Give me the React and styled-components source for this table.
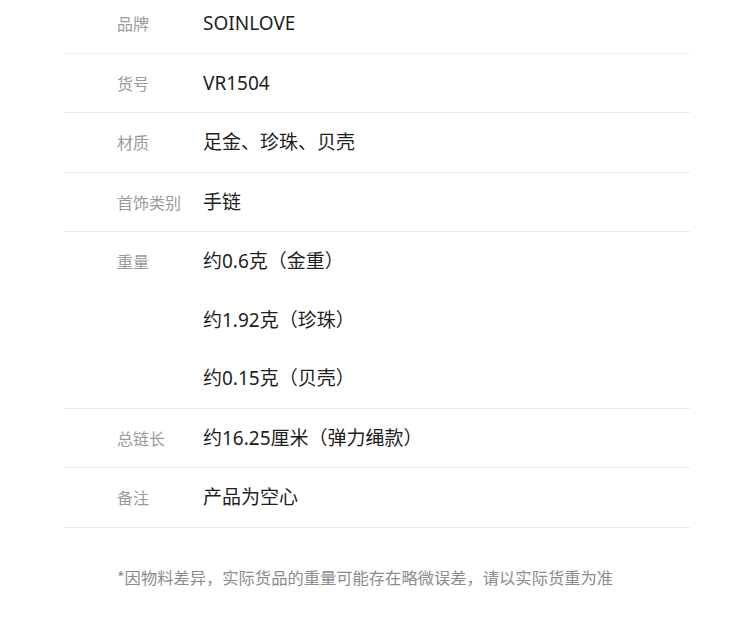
import React from 'react';
import styled, { createGlobalStyle } from 'styled-components';

const GlobalStyle = createGlobalStyle`
  html, body {
    margin: 0;
    padding: 0;
    background: #ffffff;
  }
  body {
    font-family: 'Noto Sans', 'Noto Sans CJK SC', sans-serif;
  }
`;

const specs = [
  { label: '品牌', values: ['SOINLOVE'] },
  { label: '货号', values: ['VR1504'] },
  { label: '材质', values: ['足金、珍珠、贝壳'] },
  { label: '首饰类别', values: ['手链'] },
  { label: '重量', values: ['约0.6克（金重）', '约1.92克（珍珠）', '约0.15克（贝壳）'] },
  { label: '总链长', values: ['约16.25厘米（弹力绳款）'] },
  { label: '备注', values: ['产品为空心'] },
];

function App() {
  return (
    <Page>
      <GlobalStyle />
      <SpecTable>
        {specs.map((s) => (
          <SpecRow key={s.label}>
            <Label>{s.label}</Label>
            <Values>
              {s.values.map((v) => (
                <Value key={v}>{v}</Value>
              ))}
            </Values>
          </SpecRow>
        ))}
      </SpecTable>
      <Note>*因物料差异，实际货品的重量可能存在略微误差，请以实际货重为准</Note>
    </Page>
  );
}

export default App;

//// Styles ////

const Page = styled.div`
  width: 750px;
  height: 641px;
  overflow: hidden;
  background: #ffffff;
`;

const SpecTable = styled.div`
  margin: -6px 60px 0 64px;
  display: flex;
  flex-direction: column;
`;

const SpecRow = styled.div`
  display: flex;
  align-items: flex-start;
  padding-left: 53px;
  border-bottom: 1px solid #ebebeb;
`;

const Label = styled.div`
  width: 86px;
  flex-shrink: 0;
  font-family: 'Noto Sans CJK SC', sans-serif;
  font-size: 16px;
  line-height: 58.5px;
  color: #9a9a9a;
`;

const Values = styled.div`
  display: flex;
  flex-direction: column;
`;

const Value = styled.div`
  font-family: 'Noto Sans', 'Noto Sans CJK SC', sans-serif;
  font-size: 19px;
  line-height: 58.5px;
  color: #1e1e1e;
`;

const Note = styled.p`
  margin: 37px 0 0 117px;
  font-family: 'Noto Sans CJK SC', sans-serif;
  font-size: 16.3px;
  line-height: 24px;
  color: #8c8c8c;
`;
